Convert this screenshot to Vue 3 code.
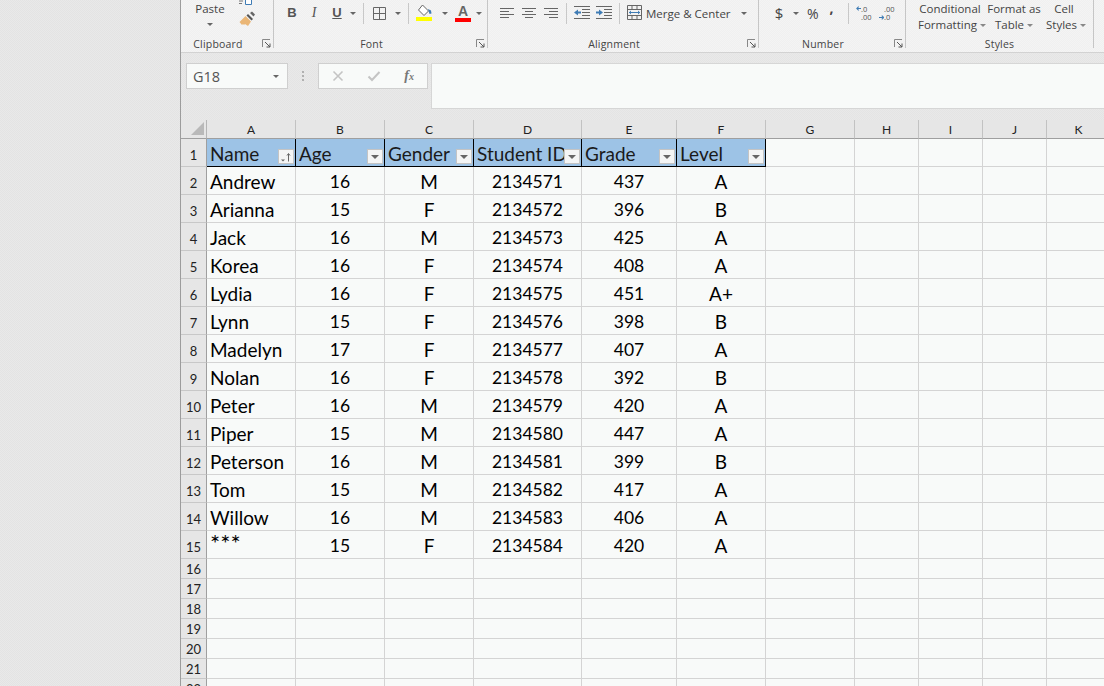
<script setup>
const columns = ['A', 'B', 'C', 'D', 'E', 'F', 'G', 'H', 'I', 'J', 'K']
const extraCols = 5

const headers = ['Name', 'Age', 'Gender', 'Student ID', 'Grade', 'Level']

const students = [
  ['Andrew', 16, 'M', 2134571, 437, 'A'],
  ['Arianna', 15, 'F', 2134572, 396, 'B'],
  ['Jack', 16, 'M', 2134573, 425, 'A'],
  ['Korea', 16, 'F', 2134574, 408, 'A'],
  ['Lydia', 16, 'F', 2134575, 451, 'A+'],
  ['Lynn', 15, 'F', 2134576, 398, 'B'],
  ['Madelyn', 17, 'F', 2134577, 407, 'A'],
  ['Nolan', 16, 'F', 2134578, 392, 'B'],
  ['Peter', 16, 'M', 2134579, 420, 'A'],
  ['Piper', 15, 'M', 2134580, 447, 'A'],
  ['Peterson', 16, 'M', 2134581, 399, 'B'],
  ['Tom', 15, 'M', 2134582, 417, 'A'],
  ['Willow', 16, 'M', 2134583, 406, 'A'],
  ['***', 15, 'F', 2134584, 420, 'A']
]

const emptyRows = [16, 17, 18, 19, 20, 21, 22]
</script>

<template>
  <div class="window">
    <aside class="side"></aside>
    <main class="excel">
      <section class="ribbon">
        <div class="group clipboard">
          <div class="tools">
            <div class="paste">
              <span>Paste</span>
              <i class="caret"></i>
            </div>
            <div class="clip-icons">
              <svg class="copy-icon" width="14" height="6" viewBox="0 0 14 6"><path d="M1 1h4M1 3.500h3" stroke="#777" fill="none"/><path d="M7.500 -3h6v7.500h-6z" fill="#fff" stroke="#3f7cb5"/></svg>
              <svg width="18" height="18" viewBox="0 0 18 18">
                <path d="M9 3l5 5-1.500 1.500-5-5z" fill="#555"/>
                <path d="M11 2l2-1.500 3 3-1.500 2z" fill="#666"/>
                <path d="M7.500 5l5.500 5.500-3 4.500-3-2-1 1-1-1-1 1-2.500-3z" fill="#eab676" transform="translate(-1 0)"/>
              </svg>
            </div>
          </div>
          <div class="label">Clipboard</div>
          <svg class="launcher" width="9" height="9" viewBox="0 0 9 9"><path d="M.5 8V.5H8" fill="none" stroke="#888"/><path d="M3 3l5 5M8 4.500V8H4.500" fill="none" stroke="#555"/></svg>
        </div>

        <div class="group font">
          <div class="tools">
            <b class="fmt bold">B</b>
            <i class="fmt italic">I</i>
            <u class="fmt under">U</u>
            <i class="caret c-u"></i>
            <span class="sep s1"></span>
            <svg class="borders" width="15" height="15" viewBox="0 0 15 15"><path d="M1.500 1.500h12v12h-12zM7.500 1.500v12M1.500 7.500h12" fill="none" stroke="#666"/></svg>
            <i class="caret c-b"></i>
            <span class="sep s2"></span>
            <svg class="fill" width="17" height="18" viewBox="0 0 17 18">
              <path d="M6.500 1l6 6-4.500 4.500-5.500-5.500z" fill="#fff" stroke="#666"/>
              <path d="M12 5l3 1.500.5 3-2 .5z" fill="#3f7cb5"/>
              <rect x="0" y="13" width="16" height="4" fill="#ffff00"/>
            </svg>
            <i class="caret c-f"></i>
            <div class="font-color">
              <span>A</span>
              <i></i>
            </div>
            <i class="caret c-a"></i>
          </div>
          <div class="label">Font</div>
          <svg class="launcher" width="9" height="9" viewBox="0 0 9 9"><path d="M.5 8V.5H8" fill="none" stroke="#888"/><path d="M3 3l5 5M8 4.500V8H4.500" fill="none" stroke="#555"/></svg>
        </div>

        <div class="group alignment">
          <div class="tools">
            <svg class="al first" width="15" height="12" viewBox="0 0 15 12"><path d="M0 1.500h14M0 4.500h9M0 7.500h14M0 10.500h9" stroke="#666"/></svg>
            <svg class="al" width="15" height="12" viewBox="0 0 15 12"><path d="M0 1.500h14M3 4.500h8M0 7.500h14M3 10.500h8" stroke="#666"/></svg>
            <svg class="al" width="15" height="12" viewBox="0 0 15 12"><path d="M0 1.500h14M5 4.500h9M0 7.500h14M5 10.500h9" stroke="#666"/></svg>
            <span class="sep s3"></span>
            <svg class="indent" width="16" height="14" viewBox="0 0 16 14"><path d="M0 .5h16M8 3.500h8M8 6.500h8M8 9.500h8M0 12.500h16" stroke="#666"/><path d="M0 6.500l4-3v2h3v2H4v2z" fill="#3f7cb5"/></svg>
            <svg class="indent i2" width="16" height="14" viewBox="0 0 16 14"><path d="M0 .5h16M8 3.500h8M8 6.500h8M8 9.500h8M0 12.500h16" stroke="#666"/><path d="M7 6.500l-4-3v2H0v2h3v2z" fill="#3f7cb5"/></svg>
            <span class="sep s4"></span>
            <svg class="merge" width="15" height="15" viewBox="0 0 15 15"><path d="M.5.500h14v14H.5zM.5 4.500h14M.5 10.500h14M5 .5v4M10 .5v4M5 10.500v4M10 10.500v4" fill="none" stroke="#666"/><path d="M2 7.500h11" stroke="#3f7cb5"/><path d="M2 7.500l2-2v4zM13 7.500l-2-2v4z" fill="#3f7cb5"/></svg>
            <span class="merge-text">Merge &amp; Center</span>
            <i class="caret c-m"></i>
          </div>
          <div class="label">Alignment</div>
          <svg class="launcher" width="9" height="9" viewBox="0 0 9 9"><path d="M.5 8V.5H8" fill="none" stroke="#888"/><path d="M3 3l5 5M8 4.500V8H4.500" fill="none" stroke="#555"/></svg>
        </div>

        <div class="group number">
          <div class="tools">
            <span class="dollar">$</span>
            <i class="caret c-d"></i>
            <span class="percent">%</span>
            <b class="comma">,</b>
            <span class="sep s5"></span>
            <div class="dec dec-more">
              <svg width="7" height="7" viewBox="0 0 7 7"><path d="M7 3.500H2M3.500 1L1 3.500 3.500 6" fill="none" stroke="#3f7cb5" stroke-width="1.300"/></svg>
              <span>.0<br>.00</span>
            </div>
            <div class="dec dec-less">
              <svg width="7" height="7" viewBox="0 0 7 7"><path d="M0 3.500h5M3.500 1L6 3.500 3.500 6" fill="none" stroke="#3f7cb5" stroke-width="1.300"/></svg>
              <span>.00<br>.0</span>
            </div>
          </div>
          <div class="label">Number</div>
          <svg class="launcher" width="9" height="9" viewBox="0 0 9 9"><path d="M.5 8V.5H8" fill="none" stroke="#888"/><path d="M3 3l5 5M8 4.500V8H4.500" fill="none" stroke="#555"/></svg>
        </div>

        <div class="group styles">
          <div class="tools style-tools">
            <div class="style-btn cond">Conditional<br>Formatting<i class="mini"></i></div>
            <div class="style-btn fmt-table">Format as<br>Table<i class="mini"></i></div>
            <div class="style-btn cell-st">Cell<br>Styles<i class="mini"></i></div>
          </div>
          <div class="label plain">Styles</div>
        </div>
      </section>

      <section class="formula-bar">
        <div class="name-box">
          <span>G18</span>
          <i class="caret"></i>
        </div>
        <div class="grip"><i></i><i></i><i></i></div>
        <div class="fn-box">
          <svg width="12" height="12" viewBox="0 0 12 12"><path d="M1.500 1.500l9 9M10.500 1.500l-9 9" stroke="#c4c4c4" stroke-width="1.600"/></svg>
          <svg width="14" height="12" viewBox="0 0 14 12"><path d="M1.500 6.500l3.500 3.500 7.500-8" fill="none" stroke="#c4c4c4" stroke-width="2"/></svg>
          <span class="fx">f<small>x</small></span>
        </div>
        <div class="formula-input"></div>
      </section>

      <section class="sheet">
        <div class="corner"><i></i></div>
        <div v-for="c in columns" :key="c" class="col-head">{{ c }}</div>

        <div class="row-head data-row">1</div>
        <div v-for="(h, i) in headers" :key="h" class="cell title">
          <span class="title-text">{{ h }}</span>
          <span class="filter">
            <svg v-if="i === 0" width="12" height="10" viewBox="0 0 12 10"><path d="M1 7.500h4L3 9.500z" fill="#666"/><path d="M8.500 9.500V2M7 3.500l1.500-2 1.500 2" fill="none" stroke="#666"/></svg>
            <i v-else></i>
          </span>
        </div>
        <div v-for="n in extraCols" :key="'t' + n" class="cell"></div>

        <template v-for="(s, r) in students" :key="r">
          <div class="row-head data-row">{{ r + 2 }}</div>
          <div class="cell name" :class="{ stars: s[0] === '***' }">{{ s[0] }}</div>
          <div v-for="(v, j) in s.slice(1)" :key="j" class="cell val" :class="{ num: typeof v === 'number' }">{{ v }}</div>
          <div v-for="n in extraCols" :key="'d' + n" class="cell"></div>
        </template>

        <template v-for="n in emptyRows" :key="n">
          <div class="row-head">{{ n }}</div>
          <div v-for="c in columns" :key="c" class="cell"></div>
        </template>
      </section>
    </main>
  </div>
</template>

<style>
html, body {
  margin: 0;
  overflow: hidden;
}
</style>

<style scoped>
.window {
  display: flex;
  width: 1104px;
  height: 686px;
  overflow: hidden;
  font-family: "Open Sans", "Liberation Sans", sans-serif;
  color: #444;
  background: #e6e6e6;
}

.side {
  width: 180px;
  flex: none;
  background: repeating-conic-gradient(#e9e9e9 0 25%, #e3e3e3 0 50%) 0 0 / 2px 2px;
  border-right: 1px solid #9c9c9c;
}

.excel {
  flex: 1;
  min-width: 0;
  display: flex;
  flex-direction: column;
}

/* ribbon */
.ribbon {
  height: 52px;
  display: flex;
  flex: none;
  background: repeating-conic-gradient(#f4f4f4 0 25%, #f0f0f0 0 50%) 0 0 / 2px 2px;
  border-bottom: 1px solid #d2d2d2;
  box-sizing: content-box;
}

.group {
  position: relative;
  flex: none;
  height: 48px;
  border-right: 1px solid #c6c6c6;
  box-sizing: border-box;
}

.clipboard { width: 93px; }
.font { width: 214px; }
.alignment { width: 271px; }
.number { width: 147px; }
.styles { width: 188px; }

.tools {
  height: 37px;
  display: flex;
  align-items: flex-start;
}

.label {
  height: 12px;
  line-height: 14px;
  font-size: 10.500px;
  text-align: center;
  letter-spacing: 0.2px;
  padding-right: 18px;
}

.label.plain {
  padding-right: 0;
}

.launcher {
  position: absolute;
  right: 2px;
  bottom: 0;
}

.caret {
  display: block;
  width: 0;
  height: 0;
  flex: none;
  border-left: 3.500px solid transparent;
  border-right: 3.500px solid transparent;
  border-top: 3.500px solid #666;
}

.sep {
  width: 1px;
  height: 21px;
  margin-top: 3px;
  background: #c8c8c8;
  flex: none;
}

/* clipboard */
.paste {
  width: 58px;
  padding-top: 1px;
  display: flex;
  flex-direction: column;
  align-items: center;
  font-size: 11.500px;
  line-height: 15px;
}

.paste .caret {
  margin-top: 7px;
}

.clip-icons {
  display: flex;
  flex-direction: column;
  align-items: flex-start;
}

.copy-icon {
  margin-left: -1px;
  margin-bottom: 5px;
}

/* font */
.fmt {
  margin-top: 5px;
  font-size: 13px;
  line-height: 16px;
  width: 10px;
  text-align: center;
  color: #555;
}

.bold {
  font-family: "Liberation Sans", sans-serif;
  margin-left: 13px;
}

.italic {
  font-family: "Liberation Serif", serif;
  font-size: 14px;
  margin-left: 12px;
}

.under {
  margin-left: 13px;
  font-family: "Liberation Sans", sans-serif;
  font-weight: 700;
}

.c-u { margin: 12px 0 0 8px; }
.s1 { margin-left: 7px; }
.borders { margin: 6px 0 0 8px; }
.c-b { margin: 12px 0 0 8px; }
.s2 { margin-left: 7px; }
.fill { margin: 4px 0 0 7px; }
.c-f { margin: 12px 0 0 9px; }

.font-color {
  margin: 5px 0 0 7px;
  width: 16px;
  display: flex;
  flex-direction: column;
  align-items: center;
}

.font-color span {
  font-family: "Liberation Sans", sans-serif;
  font-weight: 700;
  font-size: 14px;
  line-height: 13px;
  color: #666;
}

.font-color i {
  width: 16px;
  height: 4px;
  background: #ff0000;
}

.c-a { margin: 12px 0 0 5px; }

/* alignment */
.al { margin: 7px 0 0 7px; flex: none; }
.al.first { margin-left: 12px; }
.s3 { margin-left: 7px; }
.indent { margin: 6px 0 0 7px; flex: none; }
.indent.i2 { margin-left: 6px; }
.s4 { margin-left: 7px; }
.merge { margin: 5px 0 0 7px; flex: none; }

.merge-text {
  margin: 5px 0 0 4px;
  font-size: 11.500px;
  line-height: 18px;
  white-space: nowrap;
}

.c-m { margin: 12px 0 0 10px; }

/* number */
.dollar {
  margin: 3px 0 0 15px;
  font-size: 15px;
  line-height: 20px;
  width: 10px;
  text-align: center;
}

.c-d { margin: 12px 0 0 9px; }

.percent {
  margin: 4px 0 0 8px;
  font-size: 14px;
  line-height: 20px;
}

.comma {
  margin: 0 0 0 11px;
  font-size: 14px;
  line-height: 16px;
}

.s5 { margin-left: 14px; }

.dec {
  display: flex;
  margin: 5px 0 0 7px;
  width: 16px;
  font-size: 7.500px;
  line-height: 8px;
  color: #555;
  flex: none;
}

.dec-more { align-items: flex-start; }
.dec-less { align-items: flex-end; }

/* styles */
.style-tools {
  font-size: 11.500px;
  line-height: 16px;
}

.style-btn {
  text-align: center;
  white-space: nowrap;
  margin-top: 1px;
  flex: none;
}

.cond { width: 64px; margin-left: 12px; }
.fmt-table { width: 64px; }
.cell-st { width: 36px; }

.mini {
  display: inline-block;
  width: 0;
  height: 0;
  margin-left: 3px;
  vertical-align: 2px;
  border-left: 3px solid transparent;
  border-right: 3px solid transparent;
  border-top: 3px solid #888;
}

/* formula bar */
.formula-bar {
  height: 67px;
  flex: none;
  display: flex;
  align-items: flex-start;
  padding: 10px 0 0 5px;
  box-sizing: border-box;
  background: repeating-conic-gradient(#e9e9e9 0 25%, #e4e4e4 0 50%) 0 0 / 2px 2px;
}

.name-box {
  width: 102px;
  height: 26px;
  padding: 0 8px 0 6px;
  display: flex;
  align-items: center;
  justify-content: space-between;
  background: #f8faf9;
  border: 1px solid #cfcfcf;
  box-sizing: border-box;
  font-size: 14.500px;
  color: #555;
}

.grip {
  width: 30px;
  height: 26px;
  flex: none;
  display: flex;
  flex-direction: column;
  align-items: center;
  justify-content: center;
  gap: 2px;
}

.grip i {
  width: 2px;
  height: 2px;
  background: #b0b0b0;
}

.fn-box {
  width: 110px;
  height: 26px;
  flex: none;
  display: flex;
  align-items: center;
  justify-content: space-between;
  padding: 0 13px;
  background: #f8faf9;
  border: 1px solid #cfcfcf;
  box-sizing: border-box;
}

.fx {
  font-family: "Liberation Serif", serif;
  font-style: italic;
  font-weight: 700;
  font-size: 14px;
  color: #777;
}

.fx small {
  font-size: 10px;
}

.formula-input {
  flex: 1;
  margin-left: 3px;
  height: 46px;
  background: #f8faf9;
  border: 1px solid #d6d6d6;
  border-right: 0;
  box-sizing: border-box;
}

/* sheet */
.sheet {
  display: grid;
  grid-template-columns: 26px 89px 89px 89px 108px 95px 89px 89px 64px 64px 64px 64px;
  grid-template-rows: 19px repeat(15, 28px) repeat(7, 20px);
  font-family: Lato, "Liberation Sans", sans-serif;
  color: #000;
  background: #f8faf9;
}

.corner {
  display: flex;
  align-items: flex-end;
  justify-content: flex-end;
  padding: 0 2px 3px 0;
  box-sizing: border-box;
  border-right: 1px solid #b5b5b5;
  border-bottom: 1px solid #9f9f9f;
  background: #e6e6e6;
}

.corner i {
  width: 0;
  height: 0;
  border-left: 13px solid transparent;
  border-bottom: 13px solid #b9b9b9;
}

.col-head {
  display: flex;
  align-items: center;
  justify-content: center;
  font-size: 12px;
  color: #222;
  background: #e6e6e6;
  border-right: 1px solid #c2c2c2;
  border-bottom: 1px solid #9f9f9f;
  box-sizing: border-box;
}

.row-head {
  display: flex;
  align-items: center;
  justify-content: center;
  font-size: 13px;
  color: #222;
  background: #e6e6e6;
  border-right: 1px solid #9f9f9f;
  border-bottom: 1px solid #c8c8c8;
  box-sizing: border-box;
  padding-top: 1px;
}

.data-row {
  padding-top: 5px;
}

.cell {
  position: relative;
  min-width: 0;
  padding-top: 1px;
  border-right: 1px solid #d4d4d4;
  border-bottom: 1px solid #d4d4d4;
  box-sizing: border-box;
  font-size: 19px;
  line-height: 27px;
  white-space: nowrap;
  overflow: hidden;
}

.name {
  padding-left: 3px;
}

.stars {
  padding-top: 0;
  font-size: 24px;
  line-height: 24px;
}

.val {
  text-align: center;
}

.num {
  font-size: 17.500px;
}

.title {
  padding-left: 3px;
  background: #9dc3e6;
  border-right: 1px solid #000;
  border-bottom: 1px solid #000;
  color: #1a1a1a;
}

.title-text {
  display: block;
  overflow: hidden;
}

.filter {
  position: absolute;
  right: 1px;
  bottom: 2px;
  width: 16px;
  height: 15px;
  display: flex;
  align-items: center;
  justify-content: center;
  background: #f4f5f5;
  border: 1px solid #c4c4c4;
  box-sizing: border-box;
}

.filter i {
  width: 0;
  height: 0;
  border-left: 4px solid transparent;
  border-right: 4px solid transparent;
  border-top: 4px solid #666;
}
</style>
